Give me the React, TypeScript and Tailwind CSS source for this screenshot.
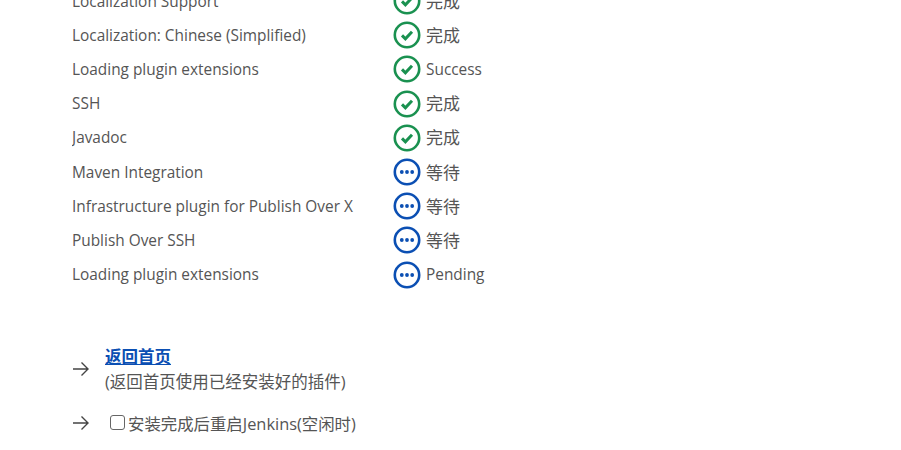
import React from "react";

interface PluginRow {
    name: string;
    status: "done" | "wait";
    label: string;
}

const rows: PluginRow[] = [
    { name: "Localization Support", status: "done", label: "完成" },
    { name: "Localization: Chinese (Simplified)", status: "done", label: "完成" },
    { name: "Loading plugin extensions", status: "done", label: "Success" },
    { name: "SSH", status: "done", label: "完成" },
    { name: "Javadoc", status: "done", label: "完成" },
    { name: "Maven Integration", status: "wait", label: "等待" },
    { name: "Infrastructure plugin for Publish Over X", status: "wait", label: "等待" },
    { name: "Publish Over SSH", status: "wait", label: "等待" },
    { name: "Loading plugin extensions", status: "wait", label: "Pending" },
];

const DoneIcon = () => (
    <svg width="28" height="28" viewBox="0 0 28 28" fill="none">
        <circle cx="14" cy="14" r="12.2" stroke="#1a9150" strokeWidth="2.6" />
        <path d="M9 14.4l3.4 3.4 6.6-7" stroke="#1a9150" strokeWidth="3" />
    </svg>
);

const WaitIcon = () => (
    <svg width="28" height="28" viewBox="0 0 28 28" fill="none">
        <circle cx="14" cy="14" r="12.2" stroke="#0b4fb3" strokeWidth="2.6" />
        <circle cx="8.8" cy="14" r="1.9" fill="#0b4fb3" />
        <circle cx="14" cy="14" r="1.9" fill="#0b4fb3" />
        <circle cx="19.2" cy="14" r="1.9" fill="#0b4fb3" />
    </svg>
);

const Arrow = () => (
    <svg width="18" height="16" viewBox="0 0 18 16" fill="none" className="shrink-0">
        <path d="M1 8h15M9.500 1.500L16 8l-6.500 6.500" stroke="#444" strokeWidth="1.400" />
    </svg>
);

export default function App() {
    return (
        <div className="h-[450px] w-[901px] overflow-hidden bg-white text-[#555] font-['Open_Sans','Noto_Sans_CJK_SC',sans-serif] text-[15.4px]">
            <div className="-mt-[16px] pl-[72px]">
                {rows.map((row, index) => (
                    <div key={index} className="flex h-[34.2px] items-center">
                        <div className="w-[321px] truncate leading-[19px]">{row.name}</div>
                        {row.status === "done" ? <DoneIcon /> : <WaitIcon />}
                        <span className={row.label.length === 2 ? "ml-[5px] text-[17px] leading-[19px]" : "ml-[5px] leading-[19px]"}>{row.label}</span>
                    </div>
                ))}
            </div>
            <div className="mt-[52px] flex items-center pl-[72px]">
                <Arrow />
                <div className="ml-[15px] text-[16.5px] leading-[25px]">
                    <a className="font-semibold text-[#0b4fb3] underline">返回首页</a>
                    <div>(返回首页使用已经安装好的插件)</div>
                </div>
            </div>
            <div className="mt-[17px] flex items-center pl-[72px]">
                <Arrow />
                <input type="checkbox" className="ml-[20px] h-[15px] w-[15px] -translate-y-px appearance-none rounded-[3px] border border-[#666] bg-white" />
                <span className="ml-[3px] text-[16.4px] leading-[25px]">安装完成后重启Jenkins(空闲时)</span>
            </div>
        </div>
    );
}
